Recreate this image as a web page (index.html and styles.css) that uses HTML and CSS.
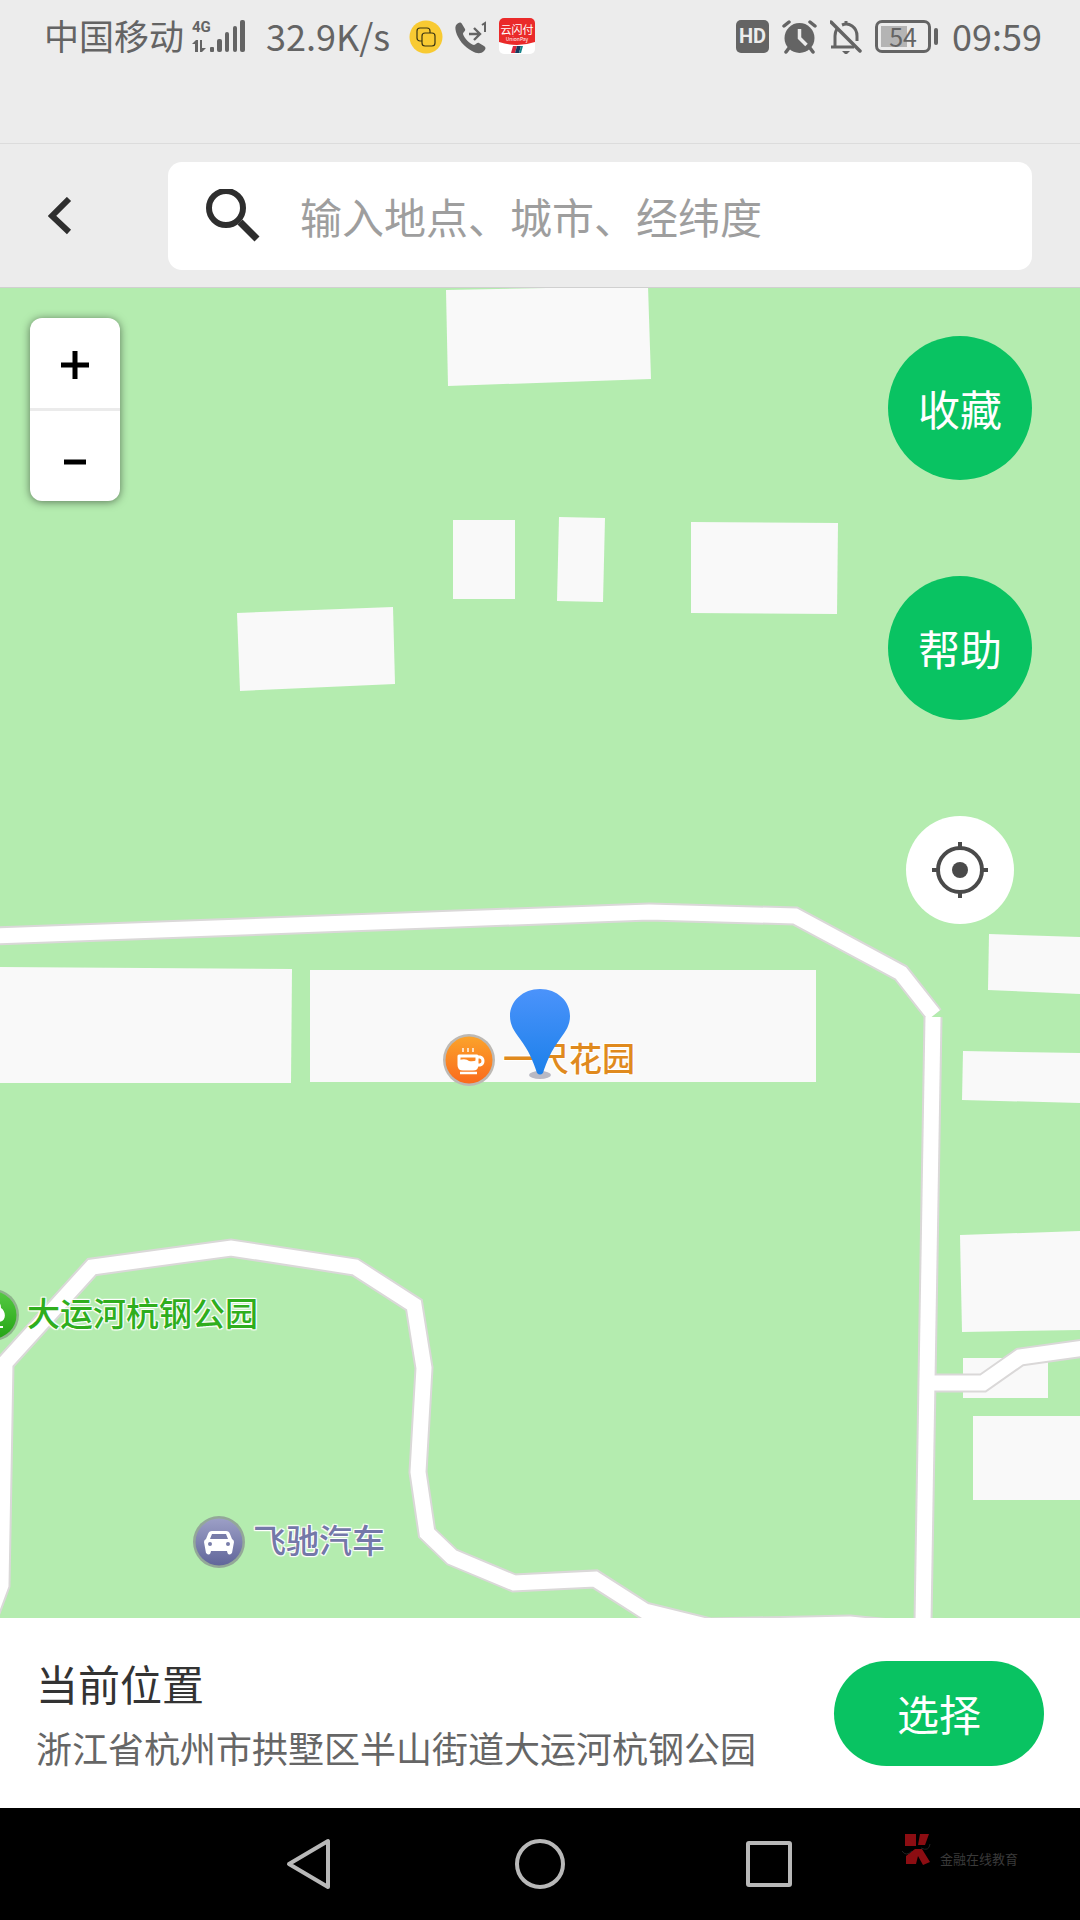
FILE: index.html
```html
<!DOCTYPE html>
<html lang="zh-CN">
<head>
  <meta charset="UTF-8" />
  <meta name="viewport" content="width=device-width, initial-scale=1.0"/>
  <title>选择位置</title>
  <link rel="stylesheet" href="styles.css">
</head>
<body>
  <div class="status-bar">
    <div class="status-left">
      <span class="carrier">中国移动</span>
      <span class="signal">
        <span class="network">4G</span>
        <svg width="54" height="36" viewBox="0 0 54 36" fill="#646464">
          <path d="M0 25l4-4h2v12H3v-8zM8 21h2v8h4l-4 4H8z"/>
          <rect x="18" y="28" width="4" height="5" rx="1"/>
          <rect x="25" y="20" width="5" height="13" rx="2"/>
          <rect x="33" y="13" width="4" height="20" rx="2"/>
          <rect x="41" y="7" width="4" height="26" rx="2"/>
          <rect x="48" y="1" width="5" height="32" rx="2"/>
        </svg>
      </span>
      <span class="speed">32.9K/s</span>
      <span class="status-icons">
        <svg width="34" height="36" viewBox="0 0 34 36" fill="none">
          <circle cx="17" cy="18" r="16.5" fill="#f8ca32"/>
          <rect x="8" y="9" width="13" height="13" rx="3" stroke="#3a3413" stroke-width="1.2"/>
          <rect x="13" y="14" width="13" height="13" rx="3" fill="#f8ca32" stroke="#3a3413" stroke-width="1.2"/>
        </svg>
        <svg width="32" height="36" viewBox="0 0 32 36" fill="none">
          <path d="M2 5c2-2 4-2 5 0l3 5c1 2-2 3-2 5 1 4 7 10 11 11 2 0 3-3 5-2l5 3c2 1 2 3 0 5-3 3-7 3-12 0C9 28 3 20 1 13 0 9 0 7 2 5z" fill="#646464"/>
          <path d="M14 15h10M19 9l6 6-6 6" stroke="#646464" stroke-width="2.4"/>
          <path d="M27 6l3-2v9" stroke="#646464" stroke-width="2"/>
        </svg>
        <svg width="36" height="38" viewBox="0 0 36 38">
          <rect width="36" height="36" rx="5" fill="#fff"/>
          <path d="M0 5a5 5 0 0 1 5-5h26a5 5 0 0 1 5 5v19q-18 6-36 0z" fill="#ea2a2a"/>
          <text x="18" y="16" text-anchor="middle" font-size="11" fill="#fff">云闪付</text>
          <text x="18" y="23" text-anchor="middle" font-size="5" fill="#fff">UnionPay</text>
          <path d="M14 28h4l-2 7h-4z" fill="#d6283c"/>
          <path d="M18 28h4l-2 7h-4z" fill="#173a5e"/>
          <path d="M22 28h2l-2 7h-2z" fill="#16858a"/>
        </svg>
      </span>
    </div>
    <div class="status-right">
      <span class="hd">HD</span>
      <svg width="35" height="34" viewBox="0 0 35 34" fill="none" stroke="#646464">
        <circle cx="17.5" cy="18" r="15" fill="#646464" stroke="none"/>
        <path d="M2 6l5-4M33 6l-5-4M7 28l-3 4M28 28l3 4" stroke-width="3.5" stroke-linecap="round"/>
        <path d="M17.5 9v9l7 7" stroke="#ececec" stroke-width="3.5"/>
      </svg>
      <svg width="32" height="34" viewBox="0 0 32 34" fill="none" stroke="#646464" stroke-width="3">
        <path d="M5 27V16c0-4 1-6 3-8M12 5c7-3 15 2 15 11v5M1 27h23M16 5V1"/>
        <path d="M1 2l29 29" stroke-width="3.5" stroke-linecap="round"/>
        <path d="M12 31h8l-3 3h-2z" fill="#646464" stroke="none"/>
      </svg>
      <span class="battery"><span class="battery-level">54</span></span>
      <span class="clock">09:59</span>
    </div>
  </div>

  <header>
    <button type="button" class="back" aria-label="返回">
      <svg width="24" height="38" viewBox="0 0 24 38"><path d="M21 2L4 19l17 16" fill="none" stroke="#2e2e2e" stroke-width="6"/></svg>
    </button>
    <form class="search">
      <label for="place" aria-label="搜索">
        <svg width="54" height="54" viewBox="0 0 54 54" fill="none" stroke="#2e2e2e">
          <circle cx="20" cy="19" r="17" stroke-width="6"/>
          <path d="M34 33l17 17" stroke-width="7"/>
        </svg>
      </label>
      <input type="text" id="place" placeholder="输入地点、城市、经纬度" />
    </form>
  </header>

  <main class="map">
    <svg class="tiles" viewBox="0 288 1080 1330" preserveAspectRatio="xMidYMid slice">
      <defs>
        <g id="roads" fill="none">
          <path d="M-5 936L649 912l146 4 106 57 33 42"/>
          <path d="M-12 1620l13-35 4-222 87-96 139-19 124 19 59 38 10 63-6 104 9 61 25 24 62 26 81-4 50 32 65 16 140-3 40 4"/>
          <path d="M928 1383h55l37-26 65-9"/>
          <path d="M933 1017l-10 605"/>
        </g>
      </defs>
      <!-- Buildings -->
      <g fill="#f9f9f9">
        <path d="M446 290l202-4 3 93-203 7z"/>
        <path d="M453 520h62v79h-62z"/>
        <path d="M559 517l46 1-2 84-46-1z"/>
        <path d="M691 522l147 1-1 91-146-1z"/>
        <path d="M237 613l156-6 2 77-155 7z"/>
        <path d="M0 967l292 2-1 114H0z"/>
        <path d="M310 970h506v112H310z"/>
        <path d="M989 934l91 3v57l-92-4z"/>
        <path d="M963 1051l117 2v50l-118-3z"/>
        <path d="M960 1235l120-4v99l-118 2z"/>
        <path d="M963 1358h85v40h-85z"/>
        <path d="M973 1416h107v84H973z"/>
      </g>
      <!-- Roads: casing below, surface on top -->
      <use href="#roads" stroke="#dad8d8" stroke-width="19"/>
      <use href="#roads" stroke="#fff" stroke-width="15"/>
    </svg>

    <div class="poi cafe">
      <svg width="52" height="52" viewBox="0 0 52 52">
        <defs><linearGradient id="orange" x2="0" y2="1"><stop stop-color="#fba32b"/><stop offset="1" stop-color="#fa6a1c"/></linearGradient></defs>
        <circle cx="26" cy="26" r="26" fill="#bdb9b4"/>
        <circle cx="26" cy="26" r="23.5" fill="url(#orange)"/>
        <path d="M16 22h18v9q0 4-4 4H20q-4 0-4-4z" fill="none" stroke="#fff" stroke-width="3" stroke-linejoin="round"/>
        <path d="M16 26q7-2 10 1 4 1 8-1v9H17z" fill="#fff"/>
        <path d="M35 23h2c4 1 4 7 0 8h-2" fill="none" stroke="#fff" stroke-width="3"/>
        <path d="M17 39h17" stroke="#fff" stroke-width="2.5"/>
        <path d="M20 14v4M25 14v4M30 14v4" stroke="#fff" stroke-width="2" opacity="0.7"/>
      </svg>
      <span>一尺花园</span>
    </div>
    <div class="poi park">
      <svg width="52" height="52" viewBox="0 0 52 52">
        <defs><linearGradient id="green" x2="0" y2="1"><stop stop-color="#55c943"/><stop offset="1" stop-color="#24a514"/></linearGradient></defs>
        <circle cx="26" cy="26" r="26" fill="#8fb48c"/>
        <circle cx="26" cy="26" r="23.5" fill="url(#green)"/>
        <path d="M26 11c6 0 8 4 8 8 5 3 6 13-2 14h-4v4h8v2H16v-2h8v-4c-9 0-12-9-6-14 0-5 3-8 8-8z" fill="#fff"/>
      </svg>
      <span>大运河杭钢公园</span>
    </div>
    <div class="poi cars">
      <svg width="52" height="52" viewBox="0 0 52 52">
        <defs><linearGradient id="violet" x2="0" y2="1"><stop stop-color="#9c9fc6"/><stop offset="1" stop-color="#61669a"/></linearGradient></defs>
        <circle cx="26" cy="26" r="26" fill="#93a898"/>
        <circle cx="26" cy="26" r="23.5" fill="url(#violet)"/>
        <path d="M19 15h14q3 0 4 3l2 5q2 1 2 3l-2 11q-4 4-5-2H18q-1 6-5 2l-2-11q0-2 2-3l2-5q1-3 4-3z" fill="#fff"/>
        <path d="M19 18h14l2 5H17z" fill="#787ca9"/>
        <circle cx="17" cy="28" r="2" fill="#787ca9"/>
        <circle cx="35" cy="28" r="2" fill="#787ca9"/>
      </svg>
      <span>飞驰汽车</span>
    </div>

    <svg class="pin" width="60" height="92" viewBox="0 0 60 92">
      <defs><linearGradient id="blue" x2="0" y2="1"><stop stop-color="#4b93fb"/><stop offset="1" stop-color="#1c80ea"/></linearGradient></defs>
      <ellipse cx="30" cy="86" rx="11" ry="4" fill="#b9b9c4"/>
      <path d="M30 0c17 0 30 12 30 27 0 9-4 15-10 23-9 12-13 22-17 34q-3 3-6 0c-4-12-8-22-17-34C4 42 0 36 0 27 0 12 13 0 30 0z" fill="url(#blue)"/>
    </svg>

    <div class="zoom">
      <button type="button" aria-label="放大"><svg width="28" height="28" viewBox="0 0 28 28"><path d="M0 14h28M14 0v28" stroke="#000" stroke-width="5"/></svg></button>
      <button type="button" aria-label="缩小"><svg width="22" height="28" viewBox="0 0 22 28"><path d="M0 14h22" stroke="#000" stroke-width="5"/></svg></button>
    </div>

    <div class="tools">
      <button type="button" class="round">收藏</button>
      <button type="button" class="round">帮助</button>
      <button type="button" class="locate" aria-label="定位">
        <svg width="56" height="56" viewBox="0 0 56 56" fill="none" stroke="#4a4a4a">
          <circle cx="28" cy="28" r="22" stroke-width="4"/>
          <circle cx="28" cy="28" r="8" fill="#4a4a4a" stroke="none"/>
          <path d="M28 0v8M28 48v8M0 28h8M48 28h8" stroke-width="4"/>
        </svg>
      </button>
    </div>
  </main>

  <section class="location">
    <div>
      <h1>当前位置</h1>
      <p>浙江省杭州市拱墅区半山街道大运河杭钢公园</p>
    </div>
    <button type="button" class="choose">选择</button>
  </section>

  <nav>
    <button type="button" aria-label="后退"><svg width="50" height="54" viewBox="0 0 50 54"><path d="M42 4v46L3 27z"/></svg></button>
    <button type="button" aria-label="主页"><svg width="50" height="54" viewBox="0 0 50 54"><circle cx="25" cy="27" r="23"/></svg></button>
    <button type="button" aria-label="最近任务"><svg width="50" height="54" viewBox="0 0 50 54"><rect x="4" y="6" width="42" height="42" rx="1"/></svg></button>
    <div class="brand">
      <svg width="30" height="34" viewBox="0 0 30 34">
        <path d="M3 1h11v12H3zM18 1h9l-4 11h-7zM13 16l7 0 8 13-7 3-5-9-2 8H4v-8z" fill="#8c0d12"/>
        <path d="M0 18q4 6 10 0M19 15q8 4 9-4" fill="none" stroke="#222" stroke-width="1"/>
      </svg>
      <span>金融在线教育</span>
    </div>
  </nav>
</body>
</html>
```
FILE: styles.css
```css
* {
  box-sizing: border-box;
}
body {
  margin: 0;
  min-height: 100vh;
  display: flex;
  flex-direction: column;
  font-family: "Noto Sans CJK SC", sans-serif;
  background: #fff;
  color: #333;
}
button {
  padding: 0;
  border: none;
  background: none;
  font-family: inherit;
  cursor: pointer;
}
svg {
  display: block;
}

/* Status bar */
.status-bar {
  display: flex;
  justify-content: space-between;
  height: 143px;
  padding: 0 38px 70px 44px;
  background: #ececec;
  color: #646464;
  font-size: 36px;
  line-height: 68px;
}
.status-left, .status-right, .status-icons {
  display: flex;
  align-items: center;
}
.status-icons {
  gap: 12px;
}
.status-right {
  gap: 13px;
}
.carrier, .speed, .clock {
  padding-bottom: 4px;
}
.carrier {
  font-size: 35px;
}
.signal {
  position: relative;
  margin: 0 20px 0 8px;
}
.network {
  position: absolute;
  top: 0;
  left: 0;
  font: bold 15px/16px Roboto, sans-serif;
}
.speed {
  margin-right: 19px;
}
.hd {
  width: 33px;
  border-radius: 5px;
  background: #646464;
  color: #ececec;
  font: bold 20px/33px Roboto, sans-serif;
  text-align: center;
}
.battery {
  position: relative;
  width: 56px;
  height: 33px;
  margin-right: 8px;
  padding: 3px;
  border: 3px solid #646464;
  border-radius: 7px;
}
.battery::after {
  content: "";
  position: absolute;
  top: 5px;
  right: -10px;
  width: 4px;
  height: 17px;
  border-radius: 2px;
  background: #646464;
}
.battery-level {
  display: block;
  height: 21px;
  background: linear-gradient(to right, #b4b4b4 60%, transparent 60%);
  font-size: 25px;
  line-height: 20px;
  text-align: center;
}

/* Search header */
header {
  display: flex;
  align-items: center;
  height: 145px;
  padding: 0 48px 0 0;
  border-top: 1px solid #dcdcdc;
  border-bottom: 1px solid #d0d0d0;
  background: #ececec;
}
.back {
  display: flex;
  justify-content: center;
  width: 120px;
  margin-right: 48px;
  padding: 20px 0;
}
.search {
  flex: 1;
  display: flex;
  align-items: center;
  height: 108px;
  padding-left: 38px;
  border-radius: 14px;
  background: #fff;
}
.search input {
  flex: 1;
  min-width: 0;
  margin-left: 40px;
  padding: 0;
  border: none;
  outline: none;
  background: none;
  color: #333;
  font-family: inherit;
  font-size: 42px;
}
.search input::placeholder {
  color: #9e9e9e;
}

/* Map */
.map {
  position: relative;
  flex: 1;
  min-height: 800px;
  overflow: hidden;
  background: #b4ecaf;
}
.tiles {
  position: absolute;
  width: 100%;
  height: 100%;
}
.poi {
  position: absolute;
  display: flex;
  align-items: center;
  gap: 8px;
  font-size: 33px;
  font-weight: 500;
  line-height: 46px;
  white-space: nowrap;
  text-shadow: 0 0 2px #fff, 1px 1px 1px #fff, -1px -1px 1px #fff, 1px -1px 1px #fff, -1px 1px 1px #fff;
}
.poi span {
  padding-bottom: 6px;
}
.cafe {
  top: 746px;
  left: 443px;
  color: #e08a1e;
}
.park {
  top: 1001px;
  left: -33px;
  color: #2fae1d;
}
.cars {
  top: 1228px;
  left: 193px;
  color: #7478a8;
}
.pin {
  position: absolute;
  top: 701px;
  left: calc(50% - 30px);
}
.zoom {
  position: absolute;
  top: 30px;
  left: 30px;
  width: 90px;
  border-radius: 12px;
  background: #fff;
  box-shadow: 0 1px 8px rgba(0, 0, 0, 0.5);
}
.zoom button {
  display: flex;
  align-items: center;
  justify-content: center;
  width: 100%;
  height: 90px;
  padding-top: 4px;
}
.zoom button + button {
  height: 93px;
  padding-top: 12px;
  border-top: 3px solid #ebebeb;
}
.tools {
  position: absolute;
  top: 48px;
  right: 48px;
  display: flex;
  flex-direction: column;
  align-items: center;
  gap: 96px;
}
.round, .choose {
  padding-bottom: 2px;
  background: #09c362;
  color: #fff;
  font-size: 42px;
}
.round {
  width: 144px;
  height: 144px;
  border-radius: 50%;
}
.locate {
  display: flex;
  align-items: center;
  justify-content: center;
  width: 108px;
  height: 108px;
  border-radius: 50%;
  background: #fff;
}

/* Current location */
.location {
  display: flex;
  align-items: center;
  justify-content: space-between;
  height: 190px;
  padding: 0 36px;
}
.location h1 {
  margin: 0;
  font-size: 42px;
  font-weight: normal;
  line-height: 68px;
}
.location p {
  margin: 0;
  color: #666;
  font-size: 36px;
  line-height: 60px;
}
.choose {
  width: 210px;
  height: 105px;
  border-radius: 53px;
}

/* System navigation */
nav {
  position: relative;
  display: flex;
  align-items: center;
  justify-content: center;
  gap: 179px;
  height: 112px;
  background: #000;
}
nav button svg {
  fill: none;
  stroke: #b8b8b8;
  stroke-width: 4;
  stroke-linejoin: round;
}
.brand {
  position: absolute;
  top: 25px;
  right: 62px;
  display: flex;
  align-items: flex-end;
  gap: 8px;
  color: #3a3a3a;
  font-size: 13px;
  line-height: 16px;
}
```
